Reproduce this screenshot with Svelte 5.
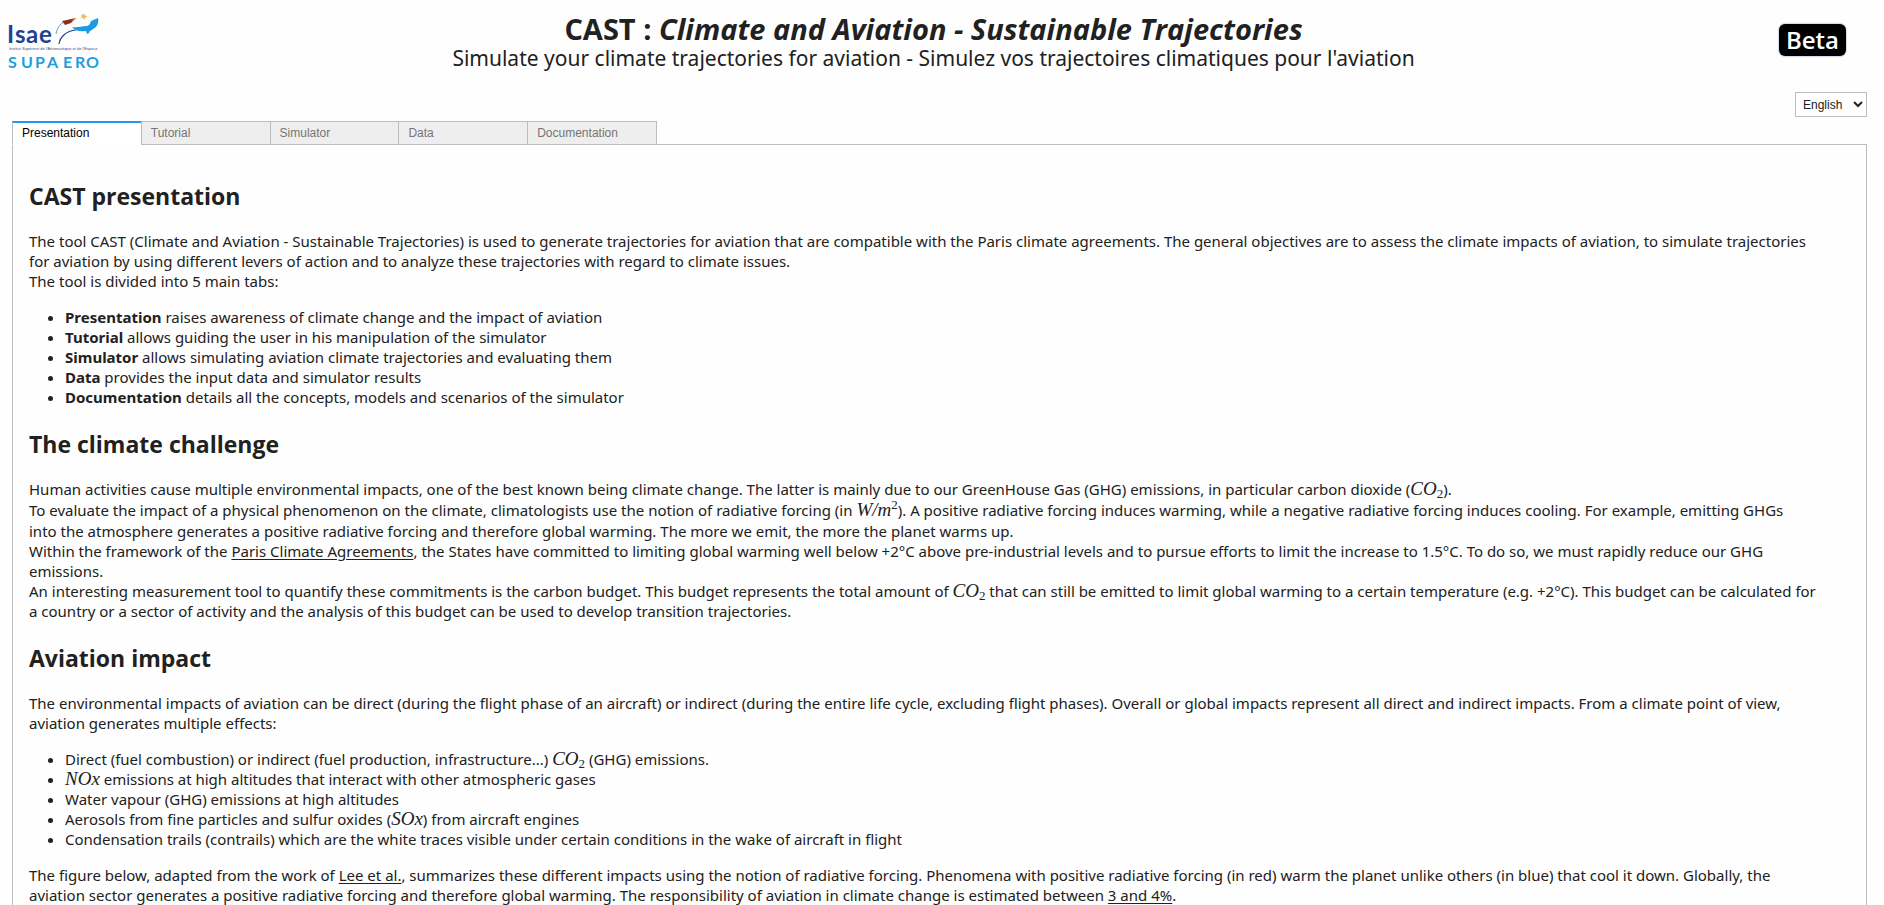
<script>
  const tabs = ['Presentation', 'Tutorial', 'Simulator', 'Data', 'Documentation'];
  let active = $state('Presentation');
  let language = $state('English');
</script>

{#snippet co2()}<span class="math">CO<sub>2</sub></span>{/snippet}

<div class="page">
  <header>
    <svg class="logo" viewBox="0 0 100 72" role="img" aria-label="ISAE SUPAERO">
      <path d="M62 21 L76 18 L71 23 L65 25 Z" fill="#8c2f1c" />
      <path d="M74 18.500 L77 18 L71 23 Z" fill="#e8a33a" />
      <path d="M84 13 l1 2.600 2.500 .6 -2.300 1.200 -.4 2.600 -1.500 -2 -2.700 .6 1.400 -2.200 -.8 -2.200 2.300 .8 Z" fill="#edb765" />
      <path d="M59 44 C60 37 66 31 76 30" fill="none" stroke="#223f8f" stroke-width="1.200" />
      <path d="M56 34 C57 28 60 24 64 22" fill="none" stroke="#5d79b5" stroke-width="0.800" />
      <path d="M72 27 C77 28 82 26 86 26 C89 26 90 24 91 21 L98 18 C99 23 97 27 93 29 C91 31 89 31 89 33 L87 34 L86 31 C80 32 75 31 72 27 Z" fill="#1d9be0" />
      <text class="wordmark" x="7 15 26 39" y="43">Isae</text>
      <text class="tagline" x="9" y="50">Institut Supérieur de l'Aéronautique et de l'Espace</text>
      <text class="school" x="8 21 35 47 63 75 86" y="68">SUPAERO</text>
    </svg>
    <div class="titles">
      <h1>CAST : <em>Climate and Aviation - Sustainable Trajectories</em></h1>
      <p>Simulate your climate trajectories for aviation - Simulez vos trajectoires climatiques pour l'aviation</p>
    </div>
    <div class="side"><span class="beta">Beta</span></div>
  </header>

  <div class="language">
    <select aria-label="Language" bind:value={language}>
      <option>English</option>
      <option>Français</option>
    </select>
  </div>

  <div class="tabs" role="tablist">
    {#each tabs as tab}
      <button role="tab" aria-selected={active === tab} class:active={active === tab} onclick={() => (active = tab)}>{tab}</button>
    {/each}
  </div>

  <main>
    <h2>CAST presentation</h2>
    <p>
      The tool CAST (Climate and Aviation - Sustainable Trajectories) is used to generate trajectories for aviation that are compatible with the Paris climate agreements. The general objectives are to assess the climate impacts of aviation, to simulate trajectories for aviation by using different levers of action and to analyze these trajectories with regard to climate issues.<br />
      The tool is divided into 5 main tabs:
    </p>
    <ul>
      <li><strong>Presentation</strong> raises awareness of climate change and the impact of aviation</li>
      <li><strong>Tutorial</strong> allows guiding the user in his manipulation of the simulator</li>
      <li><strong>Simulator</strong> allows simulating aviation climate trajectories and evaluating them</li>
      <li><strong>Data</strong> provides the input data and simulator results</li>
      <li><strong>Documentation</strong> details all the concepts, models and scenarios of the simulator</li>
    </ul>

    <h2>The climate challenge</h2>
    <p>
      Human activities cause multiple environmental impacts, one of the best known being climate change. The latter is mainly due to our GreenHouse Gas (GHG) emissions, in particular carbon dioxide ({@render co2()}).<br />
      To evaluate the impact of a physical phenomenon on the climate, climatologists use the notion of radiative forcing (in <span class="math tall">W/m<sup>2</sup></span>). A positive radiative forcing induces warming, while a negative radiative forcing induces cooling. For example, emitting GHGs into&nbsp;the atmosphere generates a positive radiative forcing and therefore global warming. The more we emit, the more the planet warms up.<br />
      Within the framework of the <a href="#paris">Paris Climate Agreements</a>, the States have committed to limiting global warming well below +2°C above pre-industrial levels and to pursue efforts to limit the increase to 1.5°C. To do so, we must rapidly reduce our GHG emissions.<br />
      An interesting measurement tool to quantify these commitments is the carbon budget. This budget represents the total amount of {@render co2()} that can still be emitted to limit global warming to a certain temperature (e.g. +2°C). This budget can be calculated for a&nbsp;country or a sector of activity and the analysis of this budget can be used to develop transition trajectories.
    </p>

    <h2>Aviation impact</h2>
    <p>
      The environmental impacts of aviation can be direct (during the flight phase of an aircraft) or indirect (during the entire life cycle, excluding flight phases). Overall or global impacts represent all direct and indirect impacts. From a climate point of view, aviation generates multiple effects:
    </p>
    <ul>
      <li>Direct (fuel combustion) or indirect (fuel production, infrastructure...) {@render co2()} (GHG) emissions.</li>
      <li><span class="math">NOx</span> emissions at high altitudes that interact with other atmospheric gases</li>
      <li>Water vapour (GHG) emissions at high altitudes</li>
      <li>Aerosols from fine particles and sulfur oxides (<span class="math">SOx</span>) from aircraft engines</li>
      <li>Condensation trails (contrails) which are the white traces visible under certain conditions in the wake of aircraft in flight</li>
    </ul>
    <p>
      The figure below, adapted from the work of <a href="#lee">Lee et al.</a>, summarizes these different impacts using the notion of radiative forcing. Phenomena with positive radiative forcing (in red) warm the planet unlike others (in blue) that cool it down. Globally, the aviation sector generates a positive radiative forcing and therefore global warming. The responsibility of aviation in climate change is estimated between <a href="#share">3 and 4%</a>.
    </p>
  </main>
</div>

<style>
  :global(body) {
    margin: 0;
    overflow: hidden;
    background: #fefefe;
  }

  .page {
    box-sizing: border-box;
    display: flex;
    flex-direction: column;
    height: 100vh;
    padding-right: 17px;
    color: #212121;
    font: 15px/20px 'Noto Sans', 'Open Sans', sans-serif;
  }

  header {
    display: grid;
    grid-template-columns: 100px 1fr 100px;
    height: 92px;
  }

  .logo {
    width: 100px;
    height: 72px;
  }

  .wordmark {
    font: bold 24px Lato, sans-serif;
    fill: #24418f;
  }

  .tagline {
    font: 4px 'Liberation Sans', sans-serif;
    fill: #3b4f86;
  }

  .school {
    font: bold 16px Lato, sans-serif;
    fill: #1d9fdc;
  }

  .titles {
    padding-top: 12px;
    text-align: center;
  }

  h1 {
    margin: 0;
    font-family: 'Open Sans', sans-serif;
    font-size: 29px;
    line-height: 34px;
  }

  .titles p {
    margin: 0;
    font-size: 21px;
    line-height: 24px;
  }

  .side {
    display: flex;
    justify-content: flex-end;
    align-items: flex-start;
    padding: 24px 21px 0 0;
  }

  .beta {
    padding: 0 7px;
    border-radius: 6px;
    background: #000;
    box-shadow: 0 0 1px 1px #d5d9e4;
    color: #fff;
    font-family: 'Open Sans', sans-serif;
    font-size: 24px;
    font-weight: 600;
    line-height: 32px;
  }

  .language {
    display: flex;
    justify-content: flex-end;
    height: 29px;
  }

  select {
    box-sizing: border-box;
    width: 72px;
    height: 25px;
    padding: 0 3px;
    border: 1px solid #bdbdbd;
    border-radius: 0;
    background-color: #fff;
    color: #212121;
    font: 12px 'Liberation Sans', sans-serif;
  }

  .tabs {
    display: flex;
    flex: none;
    max-width: 645px;
    margin-left: 12px;
    position: relative;
    z-index: 1;
  }

  .tabs button {
    box-sizing: border-box;
    flex: 1;
    height: 24px;
    padding: 0 9px;
    border: 1px solid #bdbdbd;
    background: #eee;
    color: #757575;
    font: 12px 'Liberation Sans', sans-serif;
    text-align: left;
  }

  .tabs button + button {
    margin-left: -1px;
  }

  .tabs button.active {
    padding-bottom: 2px;
    border-top: 2px solid #2196f3;
    border-bottom-color: #fff;
    background: #fff;
    color: #000;
  }

  main {
    flex: 1;
    min-height: 0;
    margin: -1px 0 0 12px;
    padding: 14px 42px 0 16px;
    border: solid #bdbdbd;
    border-width: 1px 1px 0;
    overflow: hidden;
  }

  h2 {
    margin: 24px 0 22px;
    font-family: 'Open Sans', sans-serif;
    font-size: 23px;
    line-height: 26px;
  }

  main p,
  ul {
    margin: 16px 0;
  }

  ul {
    padding-left: 36px;
  }

  a {
    color: inherit;
    text-underline-offset: 2px;
  }

  .math {
    font-family: 'Liberation Serif', serif;
    font-size: 19px;
    font-style: italic;
    line-height: 16px;
  }

  .math.tall {
    display: inline-block;
    line-height: 22px;
  }

  sub,
  sup {
    font-size: 13px;
    font-style: normal;
    line-height: 0;
  }

  sub {
    vertical-align: -3px;
  }

  sup {
    vertical-align: 7px;
  }
</style>
